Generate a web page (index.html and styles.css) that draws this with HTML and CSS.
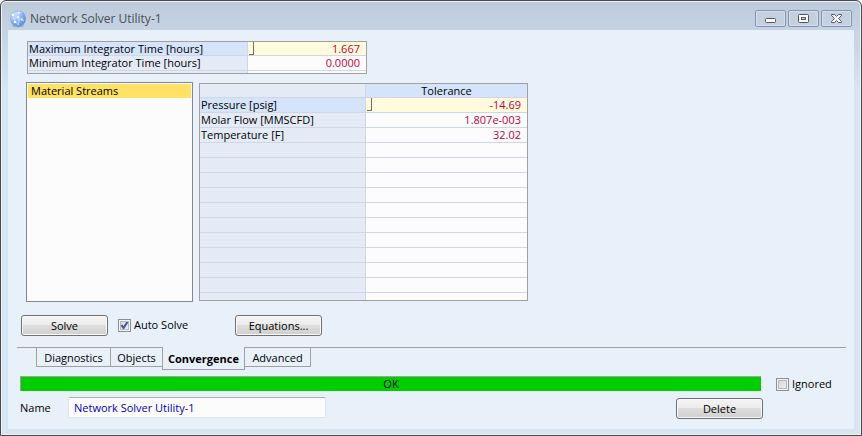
FILE: index.html
```html
<!DOCTYPE html>
<html lang="en">
<head>
<meta charset="utf-8">
<title>Network Solver Utility-1</title>
<link rel="stylesheet" href="styles.css">
</head>
<body>
<div class="window">
  <header class="titlebar">
    <svg class="app-icon" width="18" height="18" viewBox="0 0 18 18" aria-hidden="true">
      <defs>
        <radialGradient id="globe" cx="0.35" cy="0.3" r="0.8">
          <stop offset="0" stop-color="#c4dcff"/>
          <stop offset="0.5" stop-color="#8db3f2"/>
          <stop offset="1" stop-color="#5682da"/>
        </radialGradient>
      </defs>
      <ellipse cx="9" cy="16" rx="6" ry="1.5" fill="#a3afc0"/>
      <circle cx="9" cy="8.500" r="8" fill="url(#globe)"/>
      <path d="M3 6 C6 2 10 2 13 3 M2 9 C6 7 11 8 15 11 M7 2 C10 5 11 10 9 15 M4 4 C4 9 6 12 10 15" fill="none" stroke="#cfe2ff" stroke-width="0.8"/>
      <g fill="#fff"><circle cx="4" cy="5" r="1.300"/><circle cx="10" cy="3" r="1"/><circle cx="13" cy="9.500" r="1"/><circle cx="6" cy="12" r="1.200"/><circle cx="9" cy="7" r="0.900"/></g>
    </svg>
    <h1>Network Solver Utility-1</h1>
    <div class="window-buttons">
      <button type="button" aria-label="Minimize">
        <svg width="11" height="11" viewBox="0 0 11 11"><rect x="0.500" y="5.500" width="10" height="4" rx="1" fill="#fff" stroke="#545565"/></svg>
      </button>
      <button type="button" aria-label="Maximize">
        <svg width="11" height="11" viewBox="0 0 11 11"><rect x="0.500" y="1.500" width="10" height="8" rx="1" fill="#fff" stroke="#545565"/><rect x="3.500" y="4.500" width="4" height="2" fill="#c8d6e6" stroke="#545565"/></svg>
      </button>
      <button type="button" aria-label="Close">
        <svg width="11" height="11" viewBox="0 0 11 11"><path d="M0.500 1.500 H3.500 L5.500 3.500 L7.500 1.500 H10.500 V2.500 L7.500 5.500 L10.500 8.500 V9.500 H7.500 L5.500 7.500 L3.500 9.500 H0.500 V8.500 L3.500 5.500 L0.500 2.500 Z" fill="#fff" stroke="#545565"/></svg>
      </button>
    </div>
  </header>

  <main class="client">
    <section class="panel">
      <table class="grid limits">
        <colgroup><col class="label-col"><col></colgroup>
        <tr class="current"><th scope="row">Maximum Integrator Time [hours]</th><td>1.667</td></tr>
        <tr><th scope="row">Minimum Integrator Time [hours]</th><td>0.0000</td></tr>
        <tr class="rest"><th></th><td></td></tr>
      </table>
      <div class="columns">
        <ul class="list"><li class="selected">Material Streams</li></ul>
        <table class="grid tolerances">
          <colgroup><col class="label-col"><col></colgroup>
          <thead><tr><td></td><th scope="col">Tolerance</th></tr></thead>
          <tbody>
            <tr class="current"><th scope="row">Pressure [psig]</th><td>-14.69</td></tr>
            <tr><th scope="row">Molar Flow [MMSCFD]</th><td>1.807e-003</td></tr>
            <tr><th scope="row">Temperature [F]</th><td>32.02</td></tr>
            <tr><th></th><td></td></tr>
            <tr><th></th><td></td></tr>
            <tr><th></th><td></td></tr>
            <tr><th></th><td></td></tr>
            <tr><th></th><td></td></tr>
            <tr><th></th><td></td></tr>
            <tr><th></th><td></td></tr>
            <tr><th></th><td></td></tr>
            <tr><th></th><td></td></tr>
            <tr><th></th><td></td></tr>
            <tr class="rest"><th></th><td></td></tr>
          </tbody>
        </table>
      </div>
    </section>

    <div class="actions">
      <button type="button" class="button">Solve</button>
      <label class="check auto"><input type="checkbox" checked>Auto Solve</label>
      <button type="button" class="button">Equations...</button>
    </div>

    <nav class="tabs" role="tablist">
      <button type="button" role="tab" class="tab diagnostics">Diagnostics</button>
      <button type="button" role="tab" class="tab objects">Objects</button>
      <button type="button" role="tab" class="tab active" aria-selected="true">Convergence</button>
      <button type="button" role="tab" class="tab advanced">Advanced</button>
    </nav>

    <footer class="footer">
      <div class="status" role="status">OK</div>
      <label class="check"><input type="checkbox">Ignored</label>
      <div class="name-row">
        <label for="name">Name</label>
        <input id="name" type="text" value="Network Solver Utility-1">
        <button type="button" class="button delete">Delete</button>
      </div>
    </footer>
  </main>
</div>
</body>
</html>
```
FILE: styles.css
```css
* { box-sizing: border-box; }

body {
  margin: 0;
  background: #fff;
  color: #000;
  font: 11px/14px "Open Sans", "Segoe UI", sans-serif;
}

button, input { font: inherit; color: inherit; }

.window {
  display: flex;
  flex-direction: column;
  min-height: 100vh;
  padding: 0 6px 6px;
  border: 1px solid #48484e;
  border-radius: 6px 6px 0 0;
  box-shadow: inset 0 0 0 1px #eef4fa;
  background: linear-gradient(#bccada, #d7e4f1 88px);
}

.titlebar {
  display: flex;
  align-items: center;
  height: 29px;
  padding: 6px 3px 0 2px;
}

h1 {
  flex: 1;
  margin: 0 0 0 3px;
  color: #4a4f58;
  font-size: 12px;
  font-weight: 400;
  line-height: 18px;
}

.window-buttons { display: flex; gap: 2px; }

.window-buttons button {
  display: flex;
  align-items: center;
  justify-content: center;
  width: 31px;
  height: 17px;
  padding: 0;
  border: 1px solid #8493b4;
  border-radius: 2px;
  box-shadow: inset 0 0 0 1px #d5e0ec;
  background: #c3d0df;
}

.client {
  flex: 1;
  margin: 0 1px;
  padding: 11px 8px 7px 9px;
  background: #e8f0fa;
}

.panel { padding-left: 9px; }

.grid {
  border: 1px solid #a0a0a0;
  border-collapse: separate;
  border-spacing: 0;
  table-layout: fixed;
  background: #fcfcfc;
}

.limits { width: 340px; margin-left: 1px; }
.limits .label-col { width: 220px; }
.tolerances { width: 329px; }
.tolerances .label-col { width: 166px; }

.grid th, .grid td {
  height: 15px;
  padding: 0 6px 0 1px;
  border-bottom: 1px solid #cfd7e5;
  font-weight: 400;
  line-height: 14px;
  text-align: right;
  white-space: nowrap;
}

.grid td { color: #c8003c; }

.grid th:first-child, .grid thead td {
  padding-right: 0;
  border-right: 1px solid #cfd7e5;
  background: #e4ebf7;
  text-align: left;
}

.grid thead th, .grid thead td { height: 14px; line-height: 13px; }

.grid thead th {
  padding: 0;
  background: #d5e4fb;
  text-align: center;
}

.grid .current th { background: #d5e4fb; }
.grid .current td { background: #fffbdc; }

.grid .current td::before {
  content: "";
  float: left;
  width: 4px;
  height: 12px;
  border: solid #707070;
  border-width: 0 1px 1px 0;
}

.grid .rest th, .grid .rest td { height: 7px; border-bottom: 0; }
.limits .rest th, .limits .rest td { height: 2px; }
.limits .current th, .limits .current td { height: 14px; line-height: 13px; }

.columns {
  display: flex;
  align-items: flex-start;
  gap: 6px;
  margin-top: 8px;
}

.list {
  align-self: stretch;
  width: 167px;
  min-height: 220px;
  margin: 0;
  padding: 1px;
  border: 1px solid #828790;
  background: #fcfcfc;
  list-style: none;
}

.tolerances { margin-top: 1px; }

.list li { padding: 0 3px; line-height: 14px; }
.list .selected { background: #ffe165; }

.actions {
  display: flex;
  align-items: center;
  margin: 13px 0 11px 4px;
}

.button {
  width: 87px;
  height: 21px;
  padding: 0;
  border: 1px solid #707070;
  border-radius: 3px;
  box-shadow: inset 0 0 0 1px #fafafa;
  background: linear-gradient(#f2f2f2 0 10%, #ebebeb 50%, #dddddd 50%, #cfcfcf);
  line-height: 17px;
}

.check {
  display: flex;
  align-items: center;
  gap: 3px;
  line-height: 14px;
}

.auto { width: 117px; margin-left: 10px; padding-bottom: 1px; }

.check input {
  appearance: none;
  width: 13px;
  height: 13px;
  margin: 0;
  border: 1px solid #8e8f8f;
  box-shadow: inset 0 0 0 1px #f4f4f4, inset 0 0 0 2px #b4bac2;
  background: linear-gradient(135deg, #cbd0d7, #f6f6f6);
}

.check input:checked {
  background: url("data:image/svg+xml,%3Csvg xmlns='http://www.w3.org/2000/svg' viewBox='0 0 11 11'%3E%3Cpath d='M2.500 5L4.500 8L8.500 2' fill='none' stroke='%23405494' stroke-width='2'/%3E%3C/svg%3E") center / 11px, linear-gradient(135deg, #cbd0d7, #f6f6f6);
}

.tabs {
  display: flex;
  align-items: flex-start;
  height: 23px;
}

.tabs::before, .tabs::after {
  content: "";
  width: 19px;
  border-top: 1px solid #a0a0a0;
}

.tabs::after { flex: 1; }

.tab {
  height: 20px;
  margin: 0;
  padding: 2px 0 0;
  border: 1px solid #a0a0a0;
  border-left-width: 0;
  background: none;
  line-height: 14px;
}

.diagnostics { width: 75px; border-left-width: 1px; }
.objects { width: 51px; border-right-width: 0; }
.advanced { width: 66px; }

.tab.active {
  width: 83px;
  height: 23px;
  padding-bottom: 1px;
  border-width: 0 1px 1px;
  font-weight: 700;
}

.footer {
  display: grid;
  grid-template-columns: 1fr 70px;
  column-gap: 15px;
  margin: 6px 0 0 3px;
}

.status {
  height: 15px;
  border: 1px solid #a0a0a0;
  border-width: 1px 0 0 1px;
  background: #00ce00;
  line-height: 14px;
  text-align: center;
}

.footer .check { padding-top: 1px; }

.name-row {
  grid-column: 1 / 3;
  display: flex;
  align-items: center;
  margin-top: 5px;
}

.name-row label { width: 48px; }

.name-row input {
  width: 258px;
  height: 21px;
  padding: 0 5px 1px;
  border: 1px solid #dfe4ec;
  border-top-color: #abadb3;
  border-radius: 2px;
  background: #fcfcfc;
  color: #0000c8;
}

.delete { margin: 2px 83px 0 auto; }
```
